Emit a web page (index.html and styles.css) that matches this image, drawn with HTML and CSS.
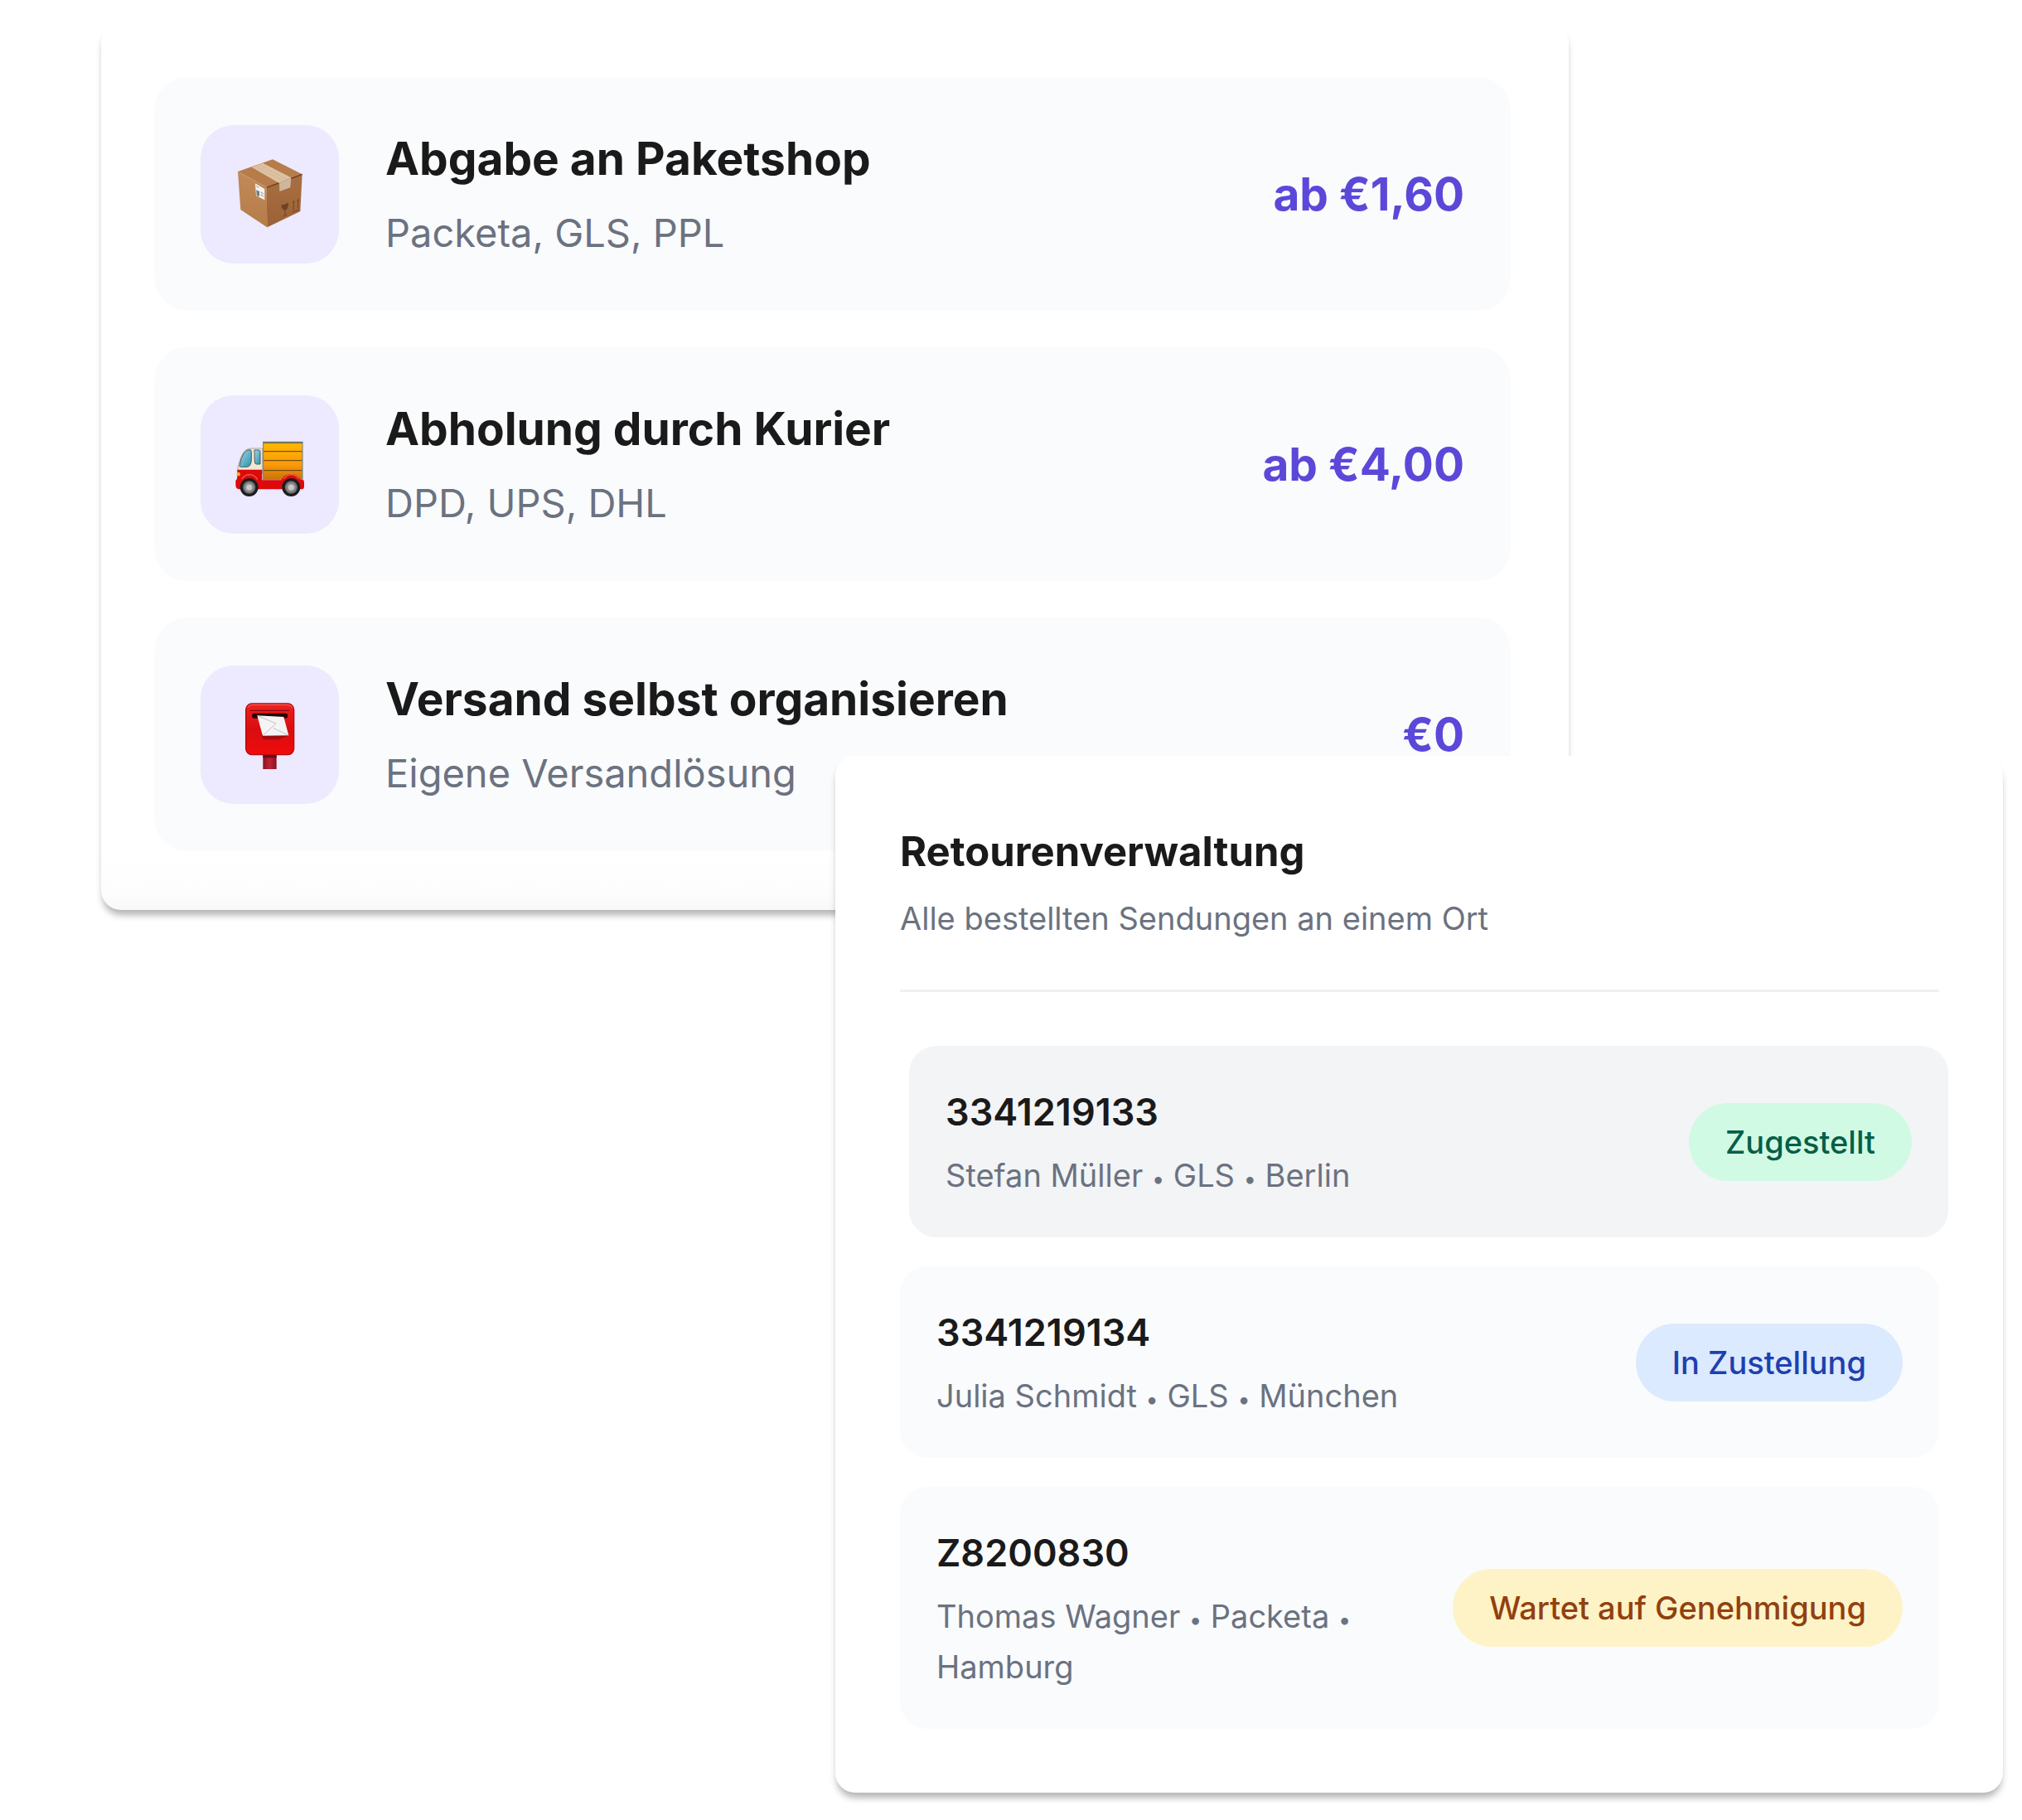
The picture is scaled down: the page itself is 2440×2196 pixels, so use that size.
FILE: index.html
```html
<!DOCTYPE html>
<html lang="de">
<head>
    <meta charset="UTF-8">
    <meta name="viewport" content="width=device-width, initial-scale=1.0">
    <title>Retourenverwaltung</title>
    <link rel="stylesheet" href="styles.css">
</head>
<body>

<main class="page">
    <section class="card card-shipping">
        <ul class="list shipping-list">
            <li class="shipping-item">
                <div class="icon-tile">
                    <svg class="icon" viewBox="161 151 252 252" aria-hidden="true">
                        <defs>
                            <linearGradient id="box-left" x1="0" y1="0" x2="0" y2="1">
                                <stop offset="0" stop-color="#c08a58"/>
                                <stop offset="1" stop-color="#b57c48"/>
                            </linearGradient>
                            <linearGradient id="box-right" x1="0" y1="0" x2="0" y2="1">
                                <stop offset="0" stop-color="#a96f41"/>
                                <stop offset="1" stop-color="#9a6236"/>
                            </linearGradient>
                        </defs>
                        <path d="M170 196L296 152L403 206L274 254Z" fill="#b67c4b"/>
                        <path d="M170 196L274 254L276 398L180 334Z" fill="url(#box-left)"/>
                        <path d="M274 254L403 206L396 340L276 398Z" fill="url(#box-right)"/>
                        <path d="M274 254L403 206" stroke="#6b3d1b" stroke-width="4"/>
                        <path d="M170 196L274 253" stroke="#cd9866" stroke-width="3"/>
                        <path d="M220 180L260 165L363 218L320 238Z" fill="#dcc2a2"/>
                        <path d="M234 176L334 230M246 171L346 224" stroke="#cdb08d" stroke-width="2"/>
                        <path d="M320 238L363 218L360 254L321 268Z" fill="#ceb69c"/>
                        <path d="M233 239L267 259L267 299L236 283Z" fill="#f4f4f2"/>
                        <path d="M237 249L246 254M252 270L264 277M252 279L264 286" stroke="#8d8d8d" stroke-width="3"/>
                        <path d="M237 262L248 268V287L238 282Z" fill="#7b7b7b"/>
                        <path d="M327 318L354 309Q352 334 341 336Q329 334 327 318Z" fill="#6f4222"/>
                        <path d="M341 334V354M333 358L348 352" stroke="#74471f" stroke-width="3"/>
                        <path d="M372 303V336M388 297V330M366 344L392 334" stroke="#74471f" stroke-width="3"/>
                        <path d="M367 310L372 301L377 306ZM383 304L388 295L393 300Z" fill="#74471f"/>
                    </svg>
                </div>
                <div class="shipping-text">
                    <h3>Abgabe an Paketshop</h3>
                    <p>Packeta, GLS, PPL</p>
                </div>
                <span class="price">ab €1,60</span>
            </li>
            <li class="shipping-item">
                <div class="icon-tile">
                    <svg class="icon" viewBox="161 158 252 252" aria-hidden="true">
                        <defs>
                            <linearGradient id="cargo" x1="0" y1="0" x2="0" y2="1">
                                <stop offset="0" stop-color="#ffb900"/>
                                <stop offset="0.6" stop-color="#fb9a0a"/>
                                <stop offset="1" stop-color="#c7720a"/>
                            </linearGradient>
                            <linearGradient id="window" x1="0" y1="0" x2="1" y2="1">
                                <stop offset="0" stop-color="#9bdce8"/>
                                <stop offset="1" stop-color="#2f8fae"/>
                            </linearGradient>
                            <radialGradient id="hub">
                                <stop offset="0" stop-color="#d6d6d6"/>
                                <stop offset="1" stop-color="#5f6062"/>
                            </radialGradient>
                        </defs>
                        <rect x="262" y="204" width="142" height="136" fill="url(#cargo)" stroke="#8a8c80" stroke-width="4"/>
                        <path d="M262 207H404" stroke="#5c5138" stroke-width="3"/>
                        <path d="M264 238H402M264 271H402M264 307H402" stroke="#5d3d0c" stroke-width="3"/>
                        <path d="M168 308Q176 262 190 242Q201 227 220 227H259V318H168Z" fill="#efe7cf" stroke="#8f8b80" stroke-width="2"/>
                        <path d="M176 291Q180 262 192 244Q201 231 215 232Q219 233 219 240V270Q217 294 203 294H180Q176 294 176 291Z" fill="url(#window)" stroke="#4b5c62" stroke-width="3"/>
                        <path d="M230 233H247Q251 234 251 240V284H237Q231 283 231 275Z" fill="url(#window)" stroke="#4b5c62" stroke-width="3"/>
                        <path d="M169 304H258V342H328Q337 320 363 320Q388 321 397 341H405Q410 342 410 349V367Q409 375 400 375H174Q162 373 162 358V345Q163 340 167 338Z" fill="#dc0a0a"/>
                        <path d="M184 338Q194 322 213 322Q232 323 241 340M336 338Q345 323 363 322Q382 323 391 338" fill="none" stroke="#f25a51" stroke-width="4"/>
                        <path d="M167 314H177Q181 320 177 327H166Z" fill="#ffb21c"/>
                        <circle cx="211" cy="368" r="33" fill="#1c1c1e"/>
                        <circle cx="211" cy="368" r="23" fill="url(#hub)"/>
                        <circle cx="211" cy="368" r="10" fill="#c9c9c9"/>
                        <circle cx="363" cy="368" r="33" fill="#1c1c1e"/>
                        <circle cx="363" cy="368" r="23" fill="url(#hub)"/>
                        <circle cx="363" cy="368" r="10" fill="#c9c9c9"/>
                    </svg>
                </div>
                <div class="shipping-text">
                    <h3>Abholung durch Kurier</h3>
                    <p>DPD, UPS, DHL</p>
                </div>
                <span class="price">ab €4,00</span>
            </li>
            <li class="shipping-item">
                <div class="icon-tile">
                    <svg class="icon" viewBox="161 161 252 252" aria-hidden="true">
                        <defs>
                            <linearGradient id="mailbox" x1="0" y1="0" x2="0" y2="1">
                                <stop offset="0" stop-color="#ee2020"/>
                                <stop offset="0.5" stop-color="#d90d10"/>
                                <stop offset="1" stop-color="#f00b0b"/>
                            </linearGradient>
                            <linearGradient id="post" x1="0" y1="0" x2="1" y2="0">
                                <stop offset="0" stop-color="#8e1020"/>
                                <stop offset="0.5" stop-color="#b92434"/>
                                <stop offset="1" stop-color="#8e1020"/>
                            </linearGradient>
                        </defs>
                        <rect x="261" y="355" width="49" height="58" fill="url(#post)"/>
                        <path d="M261 362H310V372H261Z" fill="#6f0916"/>
                        <rect x="199" y="176" width="174" height="185" rx="22" fill="url(#mailbox)" stroke="#b30a0e" stroke-width="4"/>
                        <path d="M206 190Q210 180 222 180H350Q362 180 366 190" fill="none" stroke="#ff6b60" stroke-width="3"/>
                        <path d="M214 201H357" stroke="#8f0a0d" stroke-width="4"/>
                        <rect x="221" y="211" width="130" height="18" rx="9" fill="#2a0505"/>
                        <path d="M255 288L352 293L316 306H262Z" fill="#a20a0e"/>
                        <path d="M240 219L336 224L354 291L260 292Z" fill="#f5f4f4"/>
                        <path d="M240 219L308 248L260 292M298 264L354 291" fill="none" stroke="#a9a5a5" stroke-width="2"/>
                    </svg>
                </div>
                <div class="shipping-text">
                    <h3>Versand selbst organisieren</h3>
                    <p>Eigene Versandlösung</p>
                </div>
                <span class="price">€0</span>
            </li>
        </ul>
    </section>

    <section class="card card-returns">
        <header class="returns-header">
            <h2>Retourenverwaltung</h2>
            <p>Alle bestellten Sendungen an einem Ort</p>
        </header>
        <ul class="list returns-list">
            <li class="return-item active">
                <div class="return-text">
                    <h3>3341219133</h3>
                    <p>Stefan Müller <span class="dot">•</span> GLS <span class="dot">•</span> Berlin</p>
                </div>
                <span class="badge badge-green">Zugestellt</span>
            </li>
            <li class="return-item">
                <div class="return-text">
                    <h3>3341219134</h3>
                    <p>Julia Schmidt <span class="dot">•</span> GLS <span class="dot">•</span> München</p>
                </div>
                <span class="badge badge-blue">In Zustellung</span>
            </li>
            <li class="return-item">
                <div class="return-text">
                    <h3>Z8200830</h3>
                    <p>Thomas Wagner <span class="dot">•</span> Packeta <span class="dot">•</span> Hamburg</p>
                </div>
                <span class="badge badge-yellow">Wartet auf Genehmigung</span>
            </li>
        </ul>
    </section>
</main>

</body>
</html>
```
FILE: styles.css
```css
* {
    box-sizing: border-box;
}

body {
    margin: 0;
    font-family: Inter, "Liberation Sans", sans-serif;
    background-color: #fff;
    color: #1a1a1a;
}

h2, h3, p {
    margin: 0;
}

/* Both cards share the middle column, the second one overlaps the first */
.page {
    display: grid;
    grid-template-columns: 122fr 886fr 885fr 524fr 23fr;
    padding: 28px 0 33px;
}

.card {
    background-color: #fff;
    border-radius: 24px;
    box-shadow: 0 8px 8px -2px rgba(0, 0, 0, 0.3);
}

.card-shipping {
    grid-column: 2 / 4;
    grid-row: 1;
    padding: 65px 70px 71px 64px;
    background-image: linear-gradient(to top, #f8f8f8, #fdfdfd 20px, #fff 70px);
}

.card-returns {
    grid-column: 3 / 5;
    grid-row: 2;
    margin-top: -186px;
    padding: 77px;
    padding-left: 78px;
    z-index: 1;
}

.list {
    list-style: none;
    margin: 0;
    padding: 0;
    display: flex;
    flex-direction: column;
}

/* Versandarten */
.shipping-list {
    gap: 44px;
}

.shipping-item {
    display: flex;
    align-items: center;
    gap: 56px;
    padding: 56px;
    background-color: #fafbfd;
    border-radius: 40px;
}

.icon-tile {
    display: flex;
    align-items: center;
    justify-content: center;
    width: 167px;
    height: 167px;
    background-color: #ede9fe;
    border-radius: 40px;
}

.icon {
    width: 84px;
    height: 84px;
}

.shipping-text {
    flex: 1;
}

.shipping-text h3 {
    font-size: 55px;
    line-height: 84px;
    font-weight: 700;
}

.shipping-text p {
    margin-top: 10px;
    font-size: 47px;
    line-height: 76px;
    color: #6b7280;
}

.price {
    font-size: 55px;
    line-height: 90px;
    font-weight: 700;
    color: #5b48d9;
}

/* Retouren */
.returns-header {
    padding-bottom: 55px;
    margin-bottom: 65px;
    border-bottom: 3px solid #f0f0f2;
}

.returns-header h2 {
    font-size: 49px;
    line-height: 78px;
    font-weight: 700;
}

.returns-header p {
    margin-top: 11px;
    font-size: 38px;
    line-height: 61px;
    color: #6b7280;
}

.returns-list {
    gap: 35px;
}

.return-item {
    display: flex;
    align-items: center;
    justify-content: space-between;
    gap: 44px;
    padding: 44px;
    background-color: #fafbfd;
    border-radius: 33px;
}

.return-item.active {
    background-color: #f3f4f6;
    transform: translateX(11px);
}

.return-text h3 {
    font-size: 45px;
    line-height: 71px;
    font-weight: 600;
}

.return-text p {
    margin-top: 11px;
    font-size: 38px;
    line-height: 61px;
    color: #6b7280;
}

.dot {
    font-size: 27px;
    line-height: 1;
}

.badge {
    padding: 17px 44px;
    border-radius: 47px;
    font-size: 38px;
    line-height: 60px;
    font-weight: 500;
    white-space: nowrap;
}

.badge-green {
    background-color: #d1fae5;
    color: #065f46;
}

.badge-blue {
    background-color: #dbeafe;
    color: #1e40af;
}

.badge-yellow {
    background-color: #fef3c7;
    color: #92400e;
}
```
